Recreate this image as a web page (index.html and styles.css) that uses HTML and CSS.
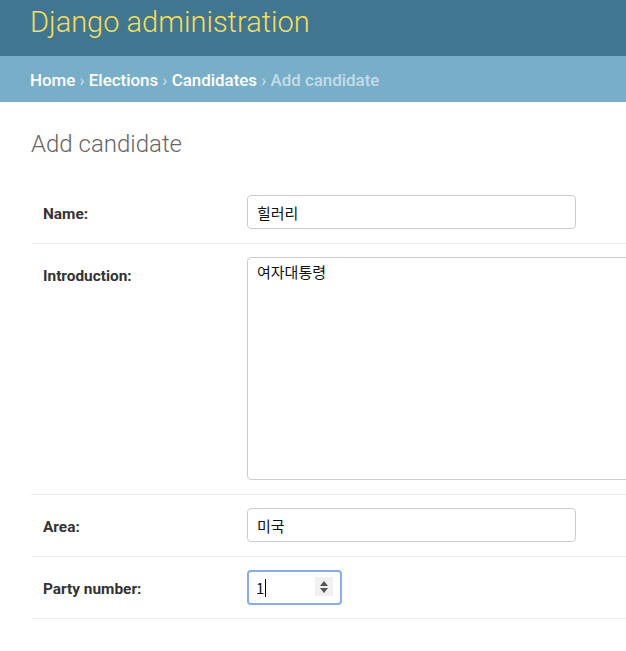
FILE: index.html
```html
<!DOCTYPE html>
<html lang="ko">
<head>
<meta charset="utf-8">
<title>Add candidate | Django site admin</title>
<link rel="stylesheet" href="styles.css">
</head>
<body>
<div class="header">
  <h1 class="branding">Django administration</h1>
</div>
<div class="breadcrumbs"><a href="#">Home</a> › <a href="#">Elections</a> › <a href="#">Candidates</a> › Add candidate</div>
<div class="content">
  <h1 class="title">Add candidate</h1>
  <form class="form">
    <div class="form-row">
      <label class="label">Name:</label>
      <input class="field text" type="text" value="힐러리">
    </div>
    <div class="form-row">
      <label class="label">Introduction:</label>
      <textarea class="field area">여자대통령</textarea>
    </div>
    <div class="form-row">
      <label class="label">Area:</label>
      <input class="field text" type="text" value="미국">
    </div>
    <div class="form-row last">
      <label class="label">Party number:</label>
      <div class="number">
        <span class="num-value">1</span><span class="caret"></span>
        <span class="spinner">
          <span class="tri up"></span>
          <span class="tri down"></span>
        </span>
      </div>
    </div>
  </form>
</div>
</body>
</html>
```

FILE: styles.css
```css
html, body {
  margin: 0;
  padding: 0;
  overflow: hidden;
  background: #fff;
}
body {
  font-family: Roboto, "Liberation Sans", "Noto Sans CJK KR", sans-serif;
  color: #333;
  width: 700px;
}
.header {
  background: #417690;
  height: 56px;
  padding: 0 30px;
  display: flex;
  align-items: center;
}
.branding {
  margin: 0;
  font-weight: 300;
  font-size: 29px;
  color: #f5dd5d;
  line-height: 1;
  position: relative;
  top: -6px;
}
.breadcrumbs {
  background: #79aec8;
  height: 46px;
  padding: 2px 30px 0;
  font-size: 16.9px;
  font-weight: 500;
  color: #c4dce8;
  line-height: 44px;
  box-sizing: border-box;
  white-space: nowrap;
}
.breadcrumbs a {
  color: #fff;
  text-decoration: none;
}
.content {
  padding: 0 0 0 31px;
}
.title {
  margin: 0;
  padding: 28px 0 23px 0;
  font-size: 24px;
  font-weight: 300;
  color: #666;
  line-height: 29px;
}
.form-row {
  display: flex;
  align-items: flex-start;
  padding: 13px 0 14px 12px;
  border-bottom: 1px solid #eee;
}
.form-row.last {
  padding-bottom: 13px;
}
.label {
  width: 204px;
  flex: none;
  font-weight: 700;
  font-size: 15.4px;
  color: #333;
  padding-top: 10px;
  line-height: 18px;
}
.field {
  box-sizing: border-box;
  border: 1px solid #ccc;
  border-radius: 4px;
  font-family: "Noto Sans CJK KR", sans-serif;
  font-size: 15px;
  color: #111;
  background: #fff;
  margin: 0;
  outline: none;
}
.text {
  width: 329px;
  height: 34px;
  padding: 0 9px;
}
.area {
  width: 440px;
  height: 223px;
  padding: 3px 9px;
  resize: none;
  line-height: 22px;
}
.number {
  box-sizing: border-box;
  width: 95px;
  height: 35px;
  border: 2px solid #86acea;
  border-radius: 4px;
  display: flex;
  align-items: center;
  padding-left: 7px;
  font-family: "Noto Sans CJK KR", sans-serif;
  font-size: 15px;
  color: #111;
  position: relative;
}
.num-value {
  line-height: 1;
}
.caret {
  width: 1px;
  height: 18px;
  background: #000;
  margin-left: 1px;
}
.spinner {
  position: absolute;
  left: 66px;
  top: 5px;
  width: 18px;
  height: 19px;
  background: #f0f0f0;
}
.tri {
  position: absolute;
  left: 5px;
  width: 0;
  height: 0;
  border-left: 4px solid transparent;
  border-right: 4px solid transparent;
}
.up {
  top: 4px;
  border-bottom: 5px solid #555;
}
.down {
  top: 11px;
  border-top: 5px solid #555;
}
```
